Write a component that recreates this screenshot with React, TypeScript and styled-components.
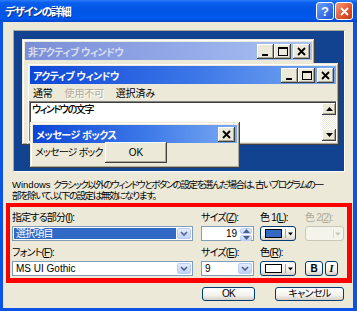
import React from "react";
import styled, { createGlobalStyle, css } from "styled-components";

const GlobalStyle = createGlobalStyle`
  html, body { margin: 0; padding: 0; background: #fff; }
  body {
    font-family: "Liberation Sans", "Noto Sans CJK JP", sans-serif;
    font-size: 10px;
    letter-spacing: -0.8px;
    font-feature-settings: "palt" 1;
    color: #000;
  }
`;

const Dialog = styled.div`
  width: 357px;
  height: 311px;
  box-sizing: border-box;
  display: flex;
  flex-direction: column;
  background: #0a53e6;
  padding-bottom: 3px;
`;

const TitleBar = styled.div`
  height: 22px;
  flex-shrink: 0;
  display: flex;
  align-items: center;
  padding-left: 5px;
  background: linear-gradient(#2b7cf6 0%, #0a5fef 12%, #0055e5 45%, #0058ee 85%, #0046c8 100%);
`;

const TitleText = styled.span`
  color: #fff;
  font-weight: bold;
  font-size: 11px;
  letter-spacing: -1.2px;
  text-shadow: 1px 1px #0f2a89;
`;

const TitleButtons = styled.div`
  margin-left: auto;
  margin-right: 4px;
  display: flex;
  gap: 1px;
`;

const XpCapButton = styled.div<{ $kind: "help" | "close" }>`
  width: 16px;
  height: 16px;
  border: 1px solid #fff;
  border-radius: 3px;
  display: flex;
  align-items: center;
  justify-content: center;
  color: #fff;
  font-weight: bold;
  font-size: 13px;
  letter-spacing: 0;
  font-family: "Liberation Sans", sans-serif;
  background: ${({ $kind }) =>
    $kind === "help"
      ? "linear-gradient(135deg, #6fa2fb, #2f67e2 70%, #2456c8)"
      : "linear-gradient(135deg, #f29a7a, #e0542c 60%, #c03a16)"};
`;

const Client = styled.div`
  flex: 1;
  margin: 0 4px 0 3px;
  background: #ece9d8;
  display: flex;
  flex-direction: column;
  padding-top: 8px;
`;

const Preview = styled.div`
  position: relative;
  overflow: hidden;
  margin-left: 10px;
  width: 332px;
  height: 142px;
  box-sizing: border-box;
  background: #114391;
  border: 1px solid;
  border-color: #aca899 #fff #fff #aca899;
`;

const ClassicWindow = styled.div<{ $x: number; $y: number; $w: number; $h: number }>`
  position: absolute;
  left: ${({ $x }) => $x}px;
  top: ${({ $y }) => $y}px;
  width: ${({ $w }) => $w}px;
  height: ${({ $h }) => $h}px;
  box-sizing: border-box;
  padding: 3px;
  background: #ece9d8;
  display: flex;
  flex-direction: column;
  box-shadow: inset -1px -1px #404040, inset 1px 1px #ece9d8,
    inset -2px -2px #aca899, inset 2px 2px #fff;
`;

const Caption = styled.div<{ $active?: boolean }>`
  height: 18px;
  flex-shrink: 0;
  display: flex;
  align-items: center;
  padding: 0 2px 0 3px;
  font-weight: bold;
  font-size: 10px;
  letter-spacing: -0.5px;
  ${({ $active }) =>
    $active
      ? css`
          background: linear-gradient(to right, #0d46d6, #3d78e8 55%, #7aaaf2);
          color: #fff;
        `
      : css`
          background: linear-gradient(to right, #7a8ed6, #95acea 60%, #aac3f2);
          color: #d9def2;
        `}
`;

const CaptionButtons = styled.div`
  margin-left: auto;
  display: flex;
`;

const CapButton = styled.div<{ $gap?: boolean }>`
  width: 17px;
  height: 15px;
  box-sizing: border-box;
  margin-left: ${({ $gap }) => ($gap ? 2 : 0)}px;
  background: #ece9d8;
  display: flex;
  align-items: center;
  justify-content: center;
  box-shadow: inset -1px -1px #404040, inset 1px 1px #fff, inset -2px -2px #aca899;
`;

const Menu = styled.div`
  height: 16px;
  display: flex;
  align-items: center;
  gap: 12px;
  padding-left: 3px;
  letter-spacing: -0.2px;
`;

const MenuItem = styled.span<{ $disabled?: boolean }>`
  color: ${({ $disabled }) => ($disabled ? "#aca899" : "#000")};
  text-shadow: ${({ $disabled }) => ($disabled ? "1px 1px #fff" : "none")};
`;

const TextPane = styled.div`
  margin: 1px -1px 0 -1px;
  height: 40px;
  background: #fff;
  display: flex;
  box-shadow: inset 1px 1px #808080, inset 2px 2px #404040;
  border-right: 1px solid #fff;
  border-bottom: 1px solid #fff;
`;

const PaneText = styled.div`
  flex: 1;
  padding: 3px 0 0 3px;
  line-height: 12px;
  font-weight: 500;
  letter-spacing: -1.4px;
`;

const ScrollBar = styled.div`
  width: 14px;
  margin: 2px 0 0 0;
  display: flex;
  flex-direction: column;
`;

const ScrollTrack = styled.div`
  flex: 1;
  background: repeating-conic-gradient(#ece9d8 0 25%, #fff 0 50%) 0 0 / 2px 2px;
`;

const ScrollArrow = styled(CapButton)`
  width: 14px;
  height: 12px;
`;

const MsgBody = styled.div`
  width: 68px;
  padding: 4px 0 0 2px;
  white-space: nowrap;
  overflow: hidden;
  line-height: 12px;
`;

const MsgOk = styled.div`
  position: absolute;
  left: 75px;
  top: 20px;
  width: 62px;
  height: 21px;
  letter-spacing: 0;
  background: #ece9d8;
  display: flex;
  align-items: center;
  justify-content: center;
  box-shadow: inset -1px -1px #404040, inset 1px 1px #fff, inset -2px -2px #aca899;
`;

const Description = styled.p`
  margin: 8px 0 0 9px;
  line-height: 10.5px;
  font-size: 9.5px;
  white-space: nowrap;
  letter-spacing: -1.45px;
`;

const Latin = styled.span`
  letter-spacing: 0;
`;

const RedFrame = styled.div`
  margin: 2px 0 0 3px;
  width: 346px;
  box-sizing: border-box;
  border: solid #ff0000;
  border-width: 4px 5px 5px 4px;
  padding: 5px 0 2px 2px;
  display: grid;
  grid-template-columns: 189px 59px 45px 39px;
  row-gap: 6px;
`;

const Field = styled.div`
  display: flex;
  flex-direction: column;
  gap: 2px;
`;

const Label = styled.span<{ $disabled?: boolean }>`
  line-height: 12px;
  height: 12px;
  white-space: nowrap;
  color: ${({ $disabled }) => ($disabled ? "#aca899" : "#000")};
`;

const Combo = styled.div<{ $w: number }>`
  width: ${({ $w }) => $w}px;
  height: 15px;
  box-sizing: border-box;
  border: 1px solid #7f9db9;
  background: #fff;
  display: flex;
  padding: 1px;
  gap: 1px;
`;

const ComboValue = styled.div<{ $selected?: boolean; $right?: boolean }>`
  flex: 1;
  line-height: 11px;
  padding: 0 2px;
  letter-spacing: ${({ $selected }) => ($selected ? "-0.8px" : "0")};
  text-align: ${({ $right }) => ($right ? "right" : "left")};
  background: ${({ $selected }) => ($selected ? "#316ac5" : "transparent")};
  color: ${({ $selected }) => ($selected ? "#fff" : "#000")};
  white-space: nowrap;
`;

const DropButton = styled.div`
  width: 14px;
  box-sizing: border-box;
  border: 1px solid #b9cdf7;
  border-radius: 2px;
  background: linear-gradient(#e3ebfd, #c0d2fa);
  display: flex;
  align-items: center;
  justify-content: center;
`;

const SpinButtons = styled.div`
  width: 12px;
  display: flex;
  flex-direction: column;
  gap: 1px;
`;

const SpinHalf = styled(DropButton)`
  width: 12px;
  flex: 1;
`;

const XpButton = styled.div<{ $w: number; $disabled?: boolean }>`
  width: ${({ $w }) => $w}px;
  height: 15px;
  box-sizing: border-box;
  border: 1px solid ${({ $disabled }) => ($disabled ? "#c9c7ba" : "#003c74")};
  border-radius: 3px;
  background: ${({ $disabled }) =>
    $disabled ? "#f5f4ea" : "linear-gradient(#fff, #f3f2ec 60%, #d6d0c5)"};
  display: flex;
  align-items: center;
  justify-content: center;
  letter-spacing: 0;
`;

const ColorFace = styled.div`
  display: flex;
  align-items: center;
  width: 100%;
  height: 100%;
  padding: 0 2px 0 4px;
  box-sizing: border-box;
`;

const Swatch = styled.div<{ $color: string }>`
  width: 22px;
  height: 7px;
  border: 1px solid #000;
  background: ${({ $color }) => $color};
`;

const SwatchBlank = styled.div`
  width: 24px;
  height: 9px;
`;

const Divider = styled.div<{ $disabled?: boolean }>`
  width: 1px;
  height: 9px;
  margin: 0 2px 0 3px;
  background: ${({ $disabled }) => ($disabled ? "#dcdac9" : "#aca899")};
`;

const StyleButtons = styled.div`
  display: flex;
  gap: 2px;
`;

const StyleGlyph = styled.span<{ $italic?: boolean }>`
  font-weight: bold;
  font-size: 10px;
  ${({ $italic }) =>
    $italic
      ? css`font-family: "Liberation Serif", serif; font-style: italic;`
      : css`font-family: "Liberation Sans", sans-serif;`}
`;

const ButtonRow = styled.div`
  display: flex;
  justify-content: flex-end;
  gap: 20px;
  margin: 4px 9px 0 0;
`;

const PushButton = styled(XpButton)`
  height: 14px;
  line-height: 12px;
  letter-spacing: -0.6px;
`;

const Chevron = () => (
  <svg width="8" height="5" viewBox="0 0 8 5">
    <polyline points="1,1 4,4 7,1" fill="none" stroke="#4d6185" strokeWidth="1.6" />
  </svg>
);

const Arrow = ({ up, color = "#000" }: { up?: boolean; color?: string }) => (
  <svg width="7" height="4" viewBox="0 0 7 4">
    <polygon points={up ? "0,4 3.5,0 7,4" : "0,0 7,0 3.5,4"} fill={color} />
  </svg>
);

const MinGlyph = () => (
  <svg width="9" height="9" viewBox="0 0 9 9">
    <rect x="1" y="7" width="6" height="2" fill="#000" />
  </svg>
);

const MaxGlyph = () => (
  <svg width="10" height="9" viewBox="0 0 10 9">
    <rect x="0.5" y="0.5" width="9" height="8" fill="none" stroke="#000" />
    <rect x="0" y="0" width="10" height="2" fill="#000" />
  </svg>
);

const CloseGlyph = ({ color = "#000", size = 9 }: { color?: string; size?: number }) => (
  <svg width={size} height={size} viewBox="0 0 9 9">
    <path d="M1 1 L8 8 M8 1 L1 8" stroke={color} strokeWidth="1.8" />
  </svg>
);

const WindowButtons = () => (
  <CaptionButtons>
    <CapButton><MinGlyph /></CapButton>
    <CapButton><MaxGlyph /></CapButton>
    <CapButton $gap><CloseGlyph /></CapButton>
  </CaptionButtons>
);

const ColorPicker = ({ color }: { color: string }) => (
  <XpButton $w={36}>
    <ColorFace>
      <Swatch $color={color} />
      <Divider />
      <Arrow />
    </ColorFace>
  </XpButton>
);

const App = () => (
  <>
    <GlobalStyle />
    <Dialog>
      <TitleBar>
        <TitleText>デザインの詳細</TitleText>
        <TitleButtons>
          <XpCapButton $kind="help">?</XpCapButton>
          <XpCapButton $kind="close"><CloseGlyph color="#fff" size={9} /></XpCapButton>
        </TitleButtons>
      </TitleBar>

      <Client>
        <Preview>
          <ClassicWindow $x={8} $y={8} $w={293} $h={106}>
            <Caption>
              非アクティブ ウィンドウ
              <WindowButtons />
            </Caption>
          </ClassicWindow>

          <ClassicWindow $x={13} $y={32} $w={312} $h={82}>
            <Caption $active>
              アクティブ ウィンドウ
              <WindowButtons />
            </Caption>
            <Menu>
              <MenuItem>通常</MenuItem>
              <MenuItem $disabled>使用不可</MenuItem>
              <MenuItem>選択済み</MenuItem>
            </Menu>
            <TextPane>
              <PaneText>ウィンドウの文字</PaneText>
              <ScrollBar>
                <ScrollArrow><Arrow up /></ScrollArrow>
                <ScrollTrack />
                <ScrollArrow><Arrow /></ScrollArrow>
              </ScrollBar>
            </TextPane>
          </ClassicWindow>

          <ClassicWindow $x={16} $y={91} $w={210} $h={46}>
            <Caption $active>
              メッセージ ボックス
              <CaptionButtons>
                <CapButton><CloseGlyph /></CapButton>
              </CaptionButtons>
            </Caption>
            <MsgBody>メッセージ ボックスの文字</MsgBody>
            <MsgOk>OK</MsgOk>
          </ClassicWindow>
        </Preview>

        <Description>
          <Latin>Windows </Latin>クラシック以外のウィンドウとボタンの設定を選んだ場合は、古いプログラムの一
          <br />
          部を除いて、以下の設定は無効になります。
        </Description>

        <RedFrame>
          <Field>
            <Label>指定する部分(<u>I</u>):</Label>
            <Combo $w={181}>
              <ComboValue $selected>選択項目</ComboValue>
              <DropButton><Chevron /></DropButton>
            </Combo>
          </Field>
          <Field>
            <Label>サイズ(<u>Z</u>):</Label>
            <Combo $w={53}>
              <ComboValue $right>19</ComboValue>
              <SpinButtons>
                <SpinHalf><Arrow up color="#4d6185" /></SpinHalf>
                <SpinHalf><Arrow color="#4d6185" /></SpinHalf>
              </SpinButtons>
            </Combo>
          </Field>
          <Field>
            <Label>色 1(<u>L</u>):</Label>
            <ColorPicker color="#316ac5" />
          </Field>
          <Field>
            <Label $disabled>色 2(<u>2</u>):</Label>
            <XpButton $w={39} $disabled>
              <ColorFace>
                <SwatchBlank />
                <Divider $disabled />
                <Arrow color="#c9c7ba" />
              </ColorFace>
            </XpButton>
          </Field>

          <Field>
            <Label>フォント(<u>F</u>):</Label>
            <Combo $w={181}>
              <ComboValue>MS UI Gothic</ComboValue>
              <DropButton><Chevron /></DropButton>
            </Combo>
          </Field>
          <Field>
            <Label>サイズ(<u>E</u>):</Label>
            <Combo $w={53}>
              <ComboValue>9</ComboValue>
              <DropButton><Chevron /></DropButton>
            </Combo>
          </Field>
          <Field>
            <Label>色(<u>R</u>):</Label>
            <ColorPicker color="#fff" />
          </Field>
          <Field>
            <Label />
            <StyleButtons>
              <XpButton $w={18}><StyleGlyph>B</StyleGlyph></XpButton>
              <XpButton $w={13}><StyleGlyph $italic>I</StyleGlyph></XpButton>
            </StyleButtons>
          </Field>
        </RedFrame>

        <ButtonRow>
          <PushButton $w={53}>OK</PushButton>
          <PushButton $w={69}>キャンセル</PushButton>
        </ButtonRow>
      </Client>
    </Dialog>
  </>
);

export default App;
